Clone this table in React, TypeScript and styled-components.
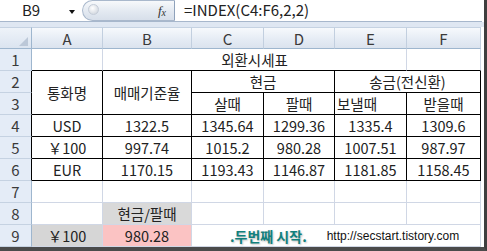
import React from 'react';
import styled, { createGlobalStyle } from 'styled-components';

const GlobalStyle = createGlobalStyle`
  html, body {
    margin: 0;
    padding: 0;
    background: #fff;
  }
  body {
    font-family: "Noto Sans CJK KR", "Noto Sans", sans-serif;
  }
`;

const GRID = '#d0d7e5';
const HEAD_LINE = '#9eb6ce';

const COLS = ['A', 'B', 'C', 'D', 'E', 'F'];

const rates = [
  ['USD', '1322.5', '1345.64', '1299.36', '1335.4', '1309.6'],
  ['￥100', '997.74', '1015.2', '980.28', '1007.51', '987.97'],
  ['EUR', '1170.15', '1193.43', '1146.87', '1181.85', '1158.45'],
];

const App: React.FC = () => {
  return (
    <Window>
      <GlobalStyle />
      <FormulaBar>
        <NameBox>B9</NameBox>
        <NameDrop>
          <Arrow />
        </NameDrop>
        <FxPill>
          <Grip />
          <Fx>
            f<sub>x</sub>
          </Fx>
        </FxPill>
        <Formula>=INDEX(C4:F6,2,2)</Formula>
      </FormulaBar>
      <Band />
      <Sheet>
        <Corner>
          <CornerMark />
        </Corner>
        {COLS.map((c) => (
          <ColHead key={c}>{c}</ColHead>
        ))}

        {/* row 1 - title */}
        <RowHead>1</RowHead>
        <Cell $top />
        <Cell $top $span={4}>외환시세표</Cell>
        <Cell $top />

        {/* rows 2-3 - header */}
        <RowHead $edge>2</RowHead>
        <Cell $boxed $rows={2}>통화명</Cell>
        <Cell $boxed $rows={2}>매매기준율</Cell>
        <Cell $boxed $span={2}>현금</Cell>
        <Cell $boxed $span={2}>송금(전신환)</Cell>
        <RowHead $edge>3</RowHead>
        <Cell $boxed>살때</Cell>
        <Cell $boxed>팔때</Cell>
        <Cell $boxed $align="left">보낼때</Cell>
        <Cell $boxed>받을때</Cell>

        {/* rows 4-6 - data */}
        {rates.map((row, i) => (
          <React.Fragment key={row[0]}>
            <RowHead $edge>{i + 4}</RowHead>
            {row.map((v, j) => (
              <Cell $boxed key={j}>
                {v}
              </Cell>
            ))}
          </React.Fragment>
        ))}

        <RowHead>7</RowHead>
        {COLS.map((c) => (
          <Cell key={c} />
        ))}

        <RowHead>8</RowHead>
        <Cell />
        <Cell $bg="#d9d9d9">현금/팔때</Cell>
        <Cell />
        <Cell />
        <Cell />
        <Cell />

        <RowHead>9</RowHead>
        <Cell $bg="#d6d6d6">￥100</Cell>
        <Cell $bg="#fbc3c3">980.28</Cell>
        <Cell $span={4} $align="left">
          <Stamp>
            <Slogan>.두번째 시작.</Slogan>
            <Url>http://secstart.tistory.com</Url>
          </Stamp>
        </Cell>
      </Sheet>
    </Window>
  );
};

export default App;

const Window = styled.div`
  width: 484px;
  height: 247px;
  background: #fff;
  border-right: 3px solid #3f3f3f;
  border-bottom: 4px solid #4b4b4b;
  overflow: hidden;
`;

const FormulaBar = styled.div`
  display: flex;
  height: 22px;
  box-sizing: border-box;
  border-bottom: 1px solid #a7b7cc;
  background: #fff;
  width: 482px;
`;

const NameBox = styled.div`
  width: 62px;
  text-align: center;
  font-size: 15px;
  line-height: 20px;
  color: #222;
`;

const NameDrop = styled.div`
  width: 20px;
  display: flex;
  align-items: center;
  justify-content: center;
`;

const Arrow = styled.div`
  width: 0;
  height: 0;
  border-left: 3.5px solid transparent;
  border-right: 3.5px solid transparent;
  border-top: 4px solid #111;
  margin-top: 2px;
`;

const FxPill = styled.div`
  width: 93px;
  box-sizing: border-box;
  display: flex;
  align-items: center;
  justify-content: space-between;
  padding: 0 8px 0 5px;
  border: 1px solid #a9b8cc;
  border-right: 1px solid #8fa2bb;
  border-radius: 11px 0 0 11px;
  background: linear-gradient(#f7f9fb, #e3e9f1 55%, #d7dfea);
`;

const Grip = styled.div`
  width: 9px;
  height: 9px;
  border-radius: 50%;
  background: radial-gradient(circle at 40% 35%, #ffffff, #c7ced8);
  border: 1px solid #c4ccd8;
  margin-top: -3px;
`;

const Fx = styled.div`
  font-family: "Liberation Serif", serif;
  font-style: italic;
  font-size: 13px;
  color: #333;
  line-height: 1;
  sub {
    font-size: 10px;
    vertical-align: -1px;
  }
`;

const Formula = styled.div`
  flex: 1;
  padding-left: 9px;
  font-size: 15px;
  line-height: 20px;
  color: #222;
  white-space: nowrap;
`;

const Band = styled.div`
  height: 5px;
  background: #dfe7f2;
`;

const Sheet = styled.div`
  display: grid;
  grid-template-columns: 32px 71px 89px 72px 71px 72px 74px;
  grid-template-rows: repeat(10, 22px);
`;

const Corner = styled.div`
  box-sizing: border-box;
  border-right: 1px solid ${HEAD_LINE};
  border-bottom: 1px solid ${HEAD_LINE};
  border-top: 1px solid #c5d2e2;
  background: linear-gradient(#eef3f9, #dbe4f0);
  display: flex;
  align-items: flex-end;
  justify-content: flex-end;
  padding: 0 3px 2px 0;
`;

const CornerMark = styled.div`
  width: 0;
  height: 0;
  border-left: 9px solid transparent;
  border-bottom: 9px solid #bcc8d8;
`;

const ColHead = styled.div`
  box-sizing: border-box;
  border-right: 1px solid #c2cfdf;
  border-bottom: 1px solid ${HEAD_LINE};
  border-top: 1px solid #c5d2e2;
  background: linear-gradient(#f6f9fc, #e4ebf4 60%, #dbe3ee);
  display: flex;
  align-items: center;
  justify-content: center;
  font-size: 15px;
  color: #3a3a3a;
`;

const RowHead = styled.div<{ $edge?: boolean }>`
  box-sizing: border-box;
  border-right: 1px solid ${(p) => (p.$edge ? '#000' : HEAD_LINE)};
  border-bottom: 1px solid #c5d2e2;
  background: #e4ecf7;
  display: flex;
  align-items: center;
  justify-content: center;
  font-size: 15px;
  color: #3a3a3a;
`;

const Cell = styled.div<{
  $span?: number;
  $rows?: number;
  $boxed?: boolean;
  $top?: boolean;
  $align?: 'left' | 'center';
  $bg?: string;
}>`
  grid-column: span ${(p) => p.$span ?? 1};
  grid-row: span ${(p) => p.$rows ?? 1};
  box-sizing: border-box;
  border-right: 1px solid ${(p) => (p.$boxed ? '#000' : GRID)};
  border-bottom: 1px solid ${(p) => (p.$boxed || p.$top ? '#000' : GRID)};
  background: ${(p) => p.$bg ?? '#fff'};
  display: flex;
  align-items: center;
  justify-content: ${(p) => (p.$align === 'left' ? 'flex-start' : 'center')};
  padding: 0 2px;
  font-size: 14.5px;
  color: #222;
  white-space: nowrap;
  overflow: hidden;
`;

const Stamp = styled.div`
  display: flex;
  align-items: center;
  gap: 20px;
  padding-left: 36px;
`;

const Slogan = styled.span`
  font-size: 14px;
  font-weight: bold;
  color: #12807d;
  text-shadow: 1px 1px 2px rgba(0, 0, 0, 0.25);
`;

const Url = styled.span`
  font-family: "Liberation Sans", Arial, sans-serif;
  font-size: 12px;
  color: #111;
`;
